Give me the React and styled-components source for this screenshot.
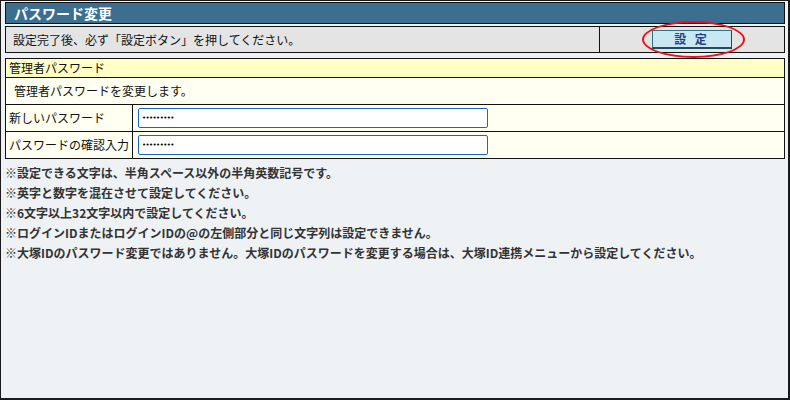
import React from "react";
import styled, { createGlobalStyle } from "styled-components";

const GlobalStyle = createGlobalStyle`
  html, body {
    margin: 0;
    padding: 0;
    background: #eef2f5;
  }
  body {
    font-family: "Noto Sans CJK JP", "Noto Sans", sans-serif;
    font-size: 12px;
    color: #111;
  }
`;

const notes = [
  "※設定できる文字は、半角スペース以外の半角英数記号です。",
  "※英字と数字を混在させて設定してください。",
  "※6文字以上32文字以内で設定してください。",
  "※ログインIDまたはログインIDの@の左側部分と同じ文字列は設定できません。",
  "※大塚IDのパスワード変更ではありません。大塚IDのパスワードを変更する場合は、大塚ID連携メニューから設定してください。",
];

export default function App() {
  return (
    <>
      <GlobalStyle />
      <Page>
        <TitleBar>パスワード変更</TitleBar>
        <ActionRow>
          <ActionText>設定完了後、必ず「設定ボタン」を押してください。</ActionText>
          <ActionCell>
            <SaveButton type="button">設 定</SaveButton>
            <Highlight />
          </ActionCell>
        </ActionRow>
        <Form>
          <SectionHead>管理者パスワード</SectionHead>
          <Description>管理者パスワードを変更します。</Description>
          <FieldRow>
            <FieldLabel>新しいパスワード</FieldLabel>
            <FieldCell>
              <PasswordInput type="password" defaultValue="123456789" />
            </FieldCell>
          </FieldRow>
          <FieldRow last>
            <FieldLabel>パスワードの確認入力</FieldLabel>
            <FieldCell>
              <PasswordInput type="password" defaultValue="123456789" />
            </FieldCell>
          </FieldRow>
        </Form>
        <Notes>
          {notes.map((n) => (
            <Note key={n}>{n}</Note>
          ))}
        </Notes>
      </Page>
    </>
  );
}

const Page = styled.div`
  box-sizing: border-box;
  width: 790px;
  height: 400px;
  border: 1px solid #1a1a1a;
  border-width: 1px 2px 2px 1px;
  padding: 1px 3px 0 4px;
  display: flex;
  flex-direction: column;
`;

const TitleBar = styled.div`
  box-sizing: border-box;
  height: 22px;
  border: 1px solid #111;
  background: #3b6e8f;
  color: #fff;
  font-weight: bold;
  font-size: 14px;
  line-height: 20px;
  padding-left: 8px;
`;

const ActionRow = styled.div`
  box-sizing: border-box;
  margin-top: 2px;
  height: 27px;
  border: 1px solid #111;
  background: #e4e4e4;
  display: grid;
  grid-template-columns: 1fr 184px;
`;

const ActionText = styled.div`
  padding-left: 7px;
  line-height: 25px;
  border-right: 1px solid #111;
`;

const ActionCell = styled.div`
  position: relative;
  display: flex;
  align-items: center;
  justify-content: center;
`;

const SaveButton = styled.button`
  box-sizing: border-box;
  width: 80px;
  height: 19px;
  padding: 0;
  background: #cbe8f2;
  border: 1px solid #2f7286;
  border-right-color: #1d4d5c;
  border-bottom: 2px solid #1d4d5c;
  color: #1d3f98;
  font-family: "Noto Sans CJK JP", sans-serif;
  font-weight: bold;
  font-size: 12px;
  letter-spacing: 3px;
  line-height: 16px;
`;

const Highlight = styled.div`
  position: absolute;
  left: 42px;
  top: -6px;
  width: 103px;
  height: 37px;
  border: 2px solid #e8101a;
  border-radius: 50%;
  box-sizing: border-box;
  pointer-events: none;
`;

const Form = styled.div`
  margin-top: 5px;
  border: 1px solid #111;
  background: #fffff2;
`;

const SectionHead = styled.div`
  height: 18px;
  line-height: 18px;
  padding-left: 3px;
  background: #ffffc6;
  border-bottom: 1px solid #111;
`;

const Description = styled.div`
  height: 26px;
  line-height: 26px;
  padding-left: 8px;
  border-bottom: 1px solid #111;
`;

const FieldRow = styled.div`
  display: grid;
  grid-template-columns: 127px 1fr;
  height: 26px;
  border-bottom: ${(p) => (p.last ? "none" : "1px solid #111")};
`;

const FieldLabel = styled.div`
  padding-left: 3px;
  line-height: 26px;
  border-right: 1px solid #111;
`;

const FieldCell = styled.div`
  display: flex;
  align-items: center;
  padding-left: 5px;
`;

const PasswordInput = styled.input`
  box-sizing: border-box;
  width: 350px;
  height: 20px;
  border: 1px solid #1a66c2;
  border-radius: 2px;
  background: #fff;
  padding: 0 3px;
  font-family: "DejaVu Sans", sans-serif;
  font-size: 7px;
  letter-spacing: -0.6px;
  color: #000;
  outline: none;
`;

const Notes = styled.div`
  margin-top: 4px;
  font-weight: bold;
  color: #333;
`;

const Note = styled.div`
  line-height: 20px;
  white-space: nowrap;
`;
